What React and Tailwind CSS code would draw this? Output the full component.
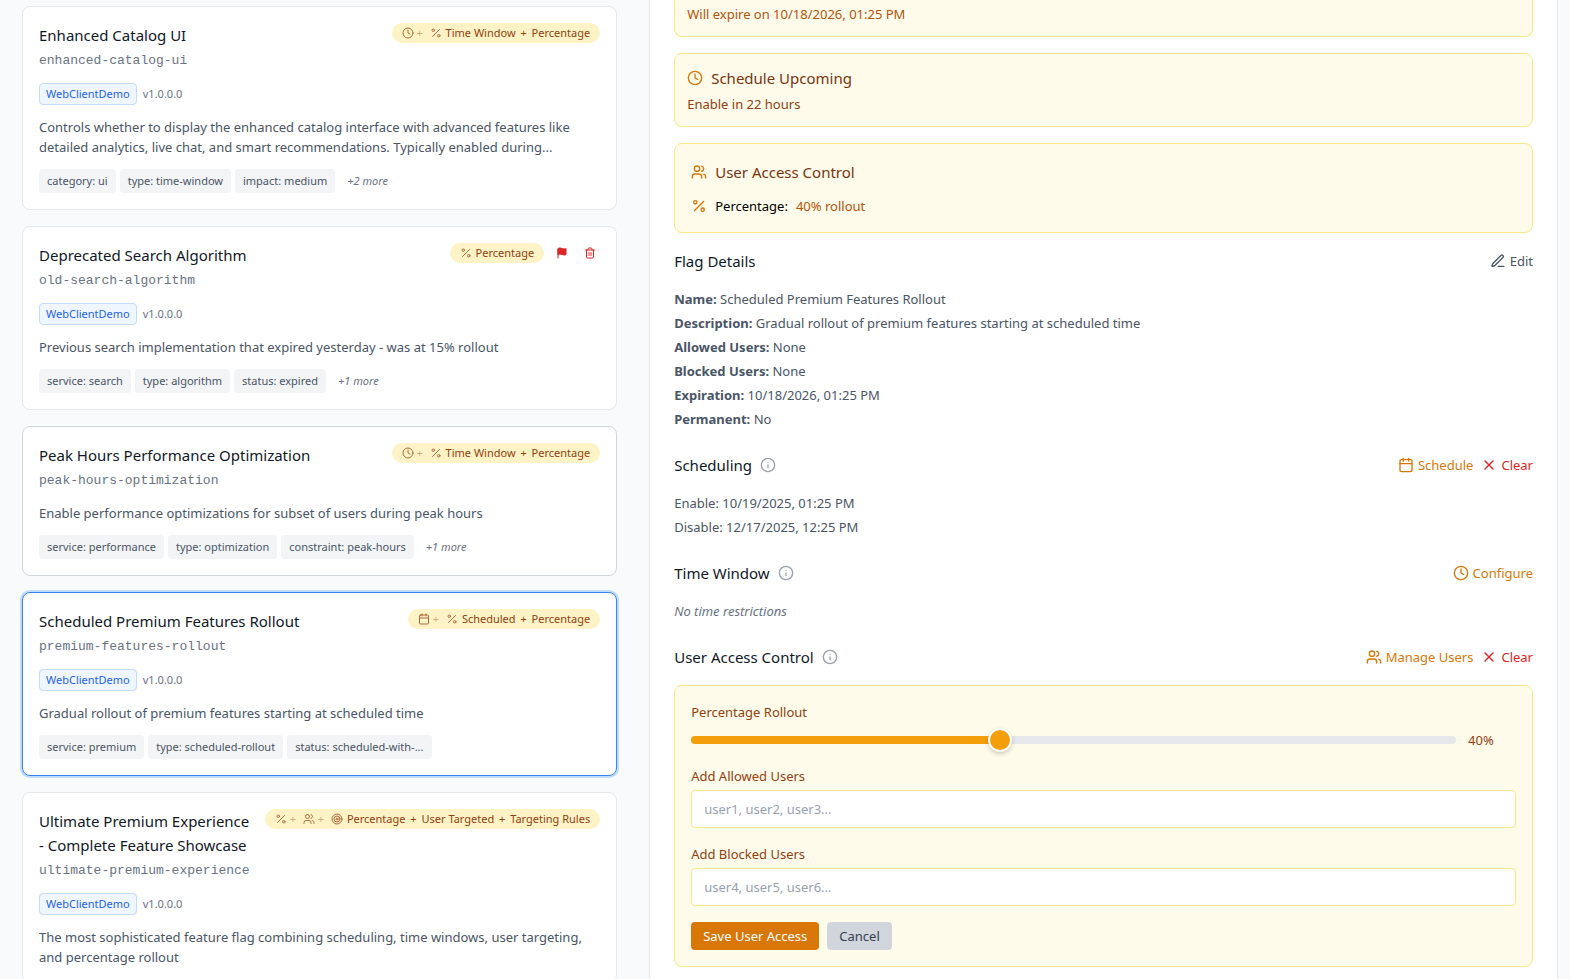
import { Fragment, useState } from "react";
import { Calendar, Clock, Info, Percent, Target, Trash2, Users, X } from "lucide-react";

function FlagIcon({ className }) {
  return (
    <svg viewBox="0 0 24 24" className={className} fill="currentColor" stroke="currentColor" strokeWidth="2" strokeLinecap="round" strokeLinejoin="round" aria-hidden="true">
      <path d="M4 15s1-1 4-1 5 2 8 2 4-1 4-1V3s-1 1-4 1-5-2-8-2-4 1-4 1z" />
      <path d="M4 22v-7" />
    </svg>
  );
}

function PenIcon({ className }) {
  return (
    <svg viewBox="0 0 24 24" className={className} fill="none" stroke="currentColor" strokeWidth="2" strokeLinecap="round" strokeLinejoin="round" aria-hidden="true">
      <path d="M12 20h9" />
      <path d="M16.376 3.622a1 1 0 0 1 3.002 3.002L7.368 18.635a2 2 0 0 1-.855.506l-2.872.838a.5.5 0 0 1-.62-.62l.838-2.872a2 2 0 0 1 .506-.854z" />
    </svg>
  );
}

const flags = [
  {
    name: "Enhanced Catalog UI",
    flagKey: "enhanced-catalog-ui",
    app: "WebClientDemo",
    icons: [Clock, Percent],
    modes: ["Time Window", "Percentage"],
    description:
      "Controls whether to display the enhanced catalog interface with advanced features like detailed analytics, live chat, and smart recommendations. Typically enabled during...",
    tags: ["category: ui", "type: time-window", "impact: medium"],
    more: "+2 more",
    border: "border-gray-200",
  },
  {
    name: "Deprecated Search Algorithm",
    flagKey: "old-search-algorithm",
    app: "WebClientDemo",
    icons: [Percent],
    modes: ["Percentage"],
    expired: true,
    description: "Previous search implementation that expired yesterday - was at 15% rollout",
    tags: ["service: search", "type: algorithm", "status: expired"],
    more: "+1 more",
    border: "border-gray-200",
  },
  {
    name: "Peak Hours Performance Optimization",
    flagKey: "peak-hours-optimization",
    icons: [Clock, Percent],
    modes: ["Time Window", "Percentage"],
    description: "Enable performance optimizations for subset of users during peak hours",
    tags: ["service: performance", "type: optimization", "constraint: peak-hours"],
    more: "+1 more",
    border: "border-gray-300",
  },
  {
    name: "Scheduled Premium Features Rollout",
    flagKey: "premium-features-rollout",
    app: "WebClientDemo",
    icons: [Calendar, Percent],
    modes: ["Scheduled", "Percentage"],
    description: "Gradual rollout of premium features starting at scheduled time",
    tags: ["service: premium", "type: scheduled-rollout", "status: scheduled-with-..."],
    border: "border-[#3b82f6] ring-2 ring-[#bfdbfe]",
  },
  {
    name: "Ultimate Premium Experience - Complete Feature Showcase",
    flagKey: "ultimate-premium-experience",
    app: "WebClientDemo",
    icons: [Percent, Users, Target],
    modes: ["Percentage", "User Targeted", "Targeting Rules"],
    description:
      "The most sophisticated feature flag combining scheduling, time windows, user targeting, and percentage rollout",
    border: "border-gray-200",
  },
];

function StatusBadge({ icons, modes }) {
  return (
    <span className="inline-flex shrink-0 items-center rounded-full bg-[#fef3c7] px-2.5 py-0.5 text-[11px] leading-4 text-[#92400e]">
      {icons.map((Icon, i) => (
        <span key={i} className="flex items-center">
          {i > 0 && <span className="mr-1.5 ml-0.5 w-2 text-center opacity-40">+</span>}
          <Icon className="size-3 opacity-75" aria-hidden="true" />
        </span>
      ))}
      <span className="ml-1">
        {modes.map((mode, i) => (
          <Fragment key={mode}>
            {i > 0 && <span className="mx-0.5"> + </span>}
            {mode}
          </Fragment>
        ))}
      </span>
    </span>
  );
}

function FlagCard({ flag }) {
  return (
    <article className={`rounded-lg border bg-white p-4 ${flag.border}`}>
      <div className="flex items-start justify-between gap-3">
        <div className="min-w-0">
          <h3 className="text-[15px] leading-6 text-gray-900">{flag.name}</h3>
          <p className="mt-1 font-['Liberation_Mono',monospace] text-[13px] leading-5 text-gray-500">{flag.flagKey}</p>
        </div>
        <div className="flex shrink-0 items-center gap-2">
          <StatusBadge icons={flag.icons} modes={flag.modes} />
          {flag.expired && (
            <>
              <button type="button" aria-label="Expired flag" className="p-1 text-[#dc2626]">
                <FlagIcon className="size-3" />
              </button>
              <button type="button" aria-label="Delete flag" className="p-1 text-[#dc2626]">
                <Trash2 className="size-3" />
              </button>
            </>
          )}
        </div>
      </div>
      {flag.app && (
        <div className="mt-3 flex items-center gap-1.5 text-[11px] leading-4">
          <span className="rounded border border-[#bfdbfe] bg-[#eff6ff] px-1.5 py-0.5 text-[#2563eb]">{flag.app}</span>
          <span className="text-gray-500">v1.0.0.0</span>
        </div>
      )}
      <p className="mt-3 text-[13px] leading-5 text-gray-600">{flag.description}</p>
      {flag.tags && (
        <div className="mt-3 flex flex-wrap gap-1 text-[11px] leading-4">
          {flag.tags.map((tag) => (
            <span key={tag} className="rounded bg-gray-100 px-2 py-1 text-gray-600">{tag}</span>
          ))}
          {flag.more && <span className="px-2 py-1 text-gray-500 italic">{flag.more}</span>}
        </div>
      )}
    </article>
  );
}

function TextButton({ icon: Icon, color, children }) {
  return (
    <button type="button" className={`flex items-center gap-1 text-[13px] leading-5 ${color}`}>
      <Icon className="size-4" aria-hidden="true" />
      {children}
    </button>
  );
}

function SectionHeader({ title, info, children }) {
  return (
    <div className="mb-4 flex items-center justify-between">
      <div className="flex items-center gap-2">
        <h4 className="text-[15px] leading-6 text-gray-900">{title}</h4>
        {info && (
          <button type="button" aria-label={`About ${title}`} className="text-gray-400">
            <Info className="size-4" />
          </button>
        )}
      </div>
      <div className="flex items-center gap-2">{children}</div>
    </div>
  );
}

const details = [
  ["Name:", "Scheduled Premium Features Rollout"],
  ["Description:", "Gradual rollout of premium features starting at scheduled time"],
  ["Allowed Users:", "None"],
  ["Blocked Users:", "None"],
  ["Expiration:", "10/18/2026, 01:25 PM"],
  ["Permanent:", "No"],
];

function UserField({ id, label, placeholder }) {
  return (
    <div className="mb-4">
      <label htmlFor={id} className="mb-1 block text-[13px] leading-5 text-[#92400e]">{label}</label>
      <input
        id={id}
        type="text"
        placeholder={placeholder}
        className="block w-full rounded border border-[#fde68a] bg-white px-3 py-2 text-[13px] leading-5 text-gray-900 placeholder:text-gray-400"
      />
    </div>
  );
}

function AccessForm() {
  const [percent, setPercent] = useState(40);
  return (
    <form className="rounded-lg border border-[#fde68a] bg-[#fffbeb] p-4" onSubmit={(e) => e.preventDefault()}>
      <label htmlFor="rollout" className="mb-2 block text-[13px] leading-5 text-[#92400e]">Percentage Rollout</label>
      <div className="mb-4 flex items-center gap-3">
        <input
          id="rollout"
          type="range"
          min="0"
          max="100"
          value={percent}
          onChange={(e) => setPercent(Number(e.target.value))}
          style={{ background: `linear-gradient(to right, #f59e0b ${percent}%, #e5e7eb ${percent}%)` }}
          className="h-2 min-w-0 flex-1 cursor-pointer appearance-none rounded-full [&::-webkit-slider-thumb]:size-6 [&::-webkit-slider-thumb]:appearance-none [&::-webkit-slider-thumb]:rounded-full [&::-webkit-slider-thumb]:border-2 [&::-webkit-slider-thumb]:border-white [&::-webkit-slider-thumb]:bg-[#f59e0b] [&::-webkit-slider-thumb]:shadow-[0_2px_4px_rgba(0,0,0,0.2)]"
        />
        <output htmlFor="rollout" className="w-12 text-[13px] leading-5 text-[#92400e]">{percent}%</output>
      </div>
      <UserField id="allowed-users" label="Add Allowed Users" placeholder="user1, user2, user3..." />
      <UserField id="blocked-users" label="Add Blocked Users" placeholder="user4, user5, user6..." />
      <div className="flex gap-2 text-[13px] leading-5">
        <button type="submit" className="rounded bg-[#d97706] px-3 py-1 text-white">Save User Access</button>
        <button type="button" className="rounded bg-gray-300 px-3 py-1 text-gray-700">Cancel</button>
      </div>
    </form>
  );
}

function FlagPanel() {
  return (
    <section className="border-x border-gray-200 bg-white px-6">
      <div className="mb-4 rounded-b-lg border border-t-0 border-[#fde68a] bg-[#fffbeb] px-3 pt-1 pb-3">
        <p className="text-[13px] leading-5 text-[#b45309]">Will expire on 10/18/2026, 01:25 PM</p>
      </div>

      <div className="mb-4 rounded-lg border border-[#fde68a] bg-[#fffbeb] p-3">
        <div className="mb-1 flex items-center gap-2">
          <Clock className="size-4 text-[#d97706]" aria-hidden="true" />
          <h4 className="text-[15px] leading-6 text-[#78350f]">Schedule Upcoming</h4>
        </div>
        <p className="text-[13px] leading-5 text-[#92400e]">Enable in 22 hours</p>
      </div>

      <div className="mb-4 rounded-lg border border-[#fde68a] bg-[#fffbeb] p-4">
        <div className="mb-3 flex items-center gap-2">
          <Users className="size-4 text-[#d97706]" aria-hidden="true" />
          <h4 className="text-[15px] leading-6 text-[#78350f]">User Access Control</h4>
        </div>
        <div className="flex items-center gap-2 text-[13px] leading-5">
          <Percent className="size-4 text-[#d97706]" aria-hidden="true" />
          <span className="text-black">Percentage:</span>
          <span className="text-[#b45309]">40% rollout</span>
        </div>
      </div>

      <div className="mb-6">
        <SectionHeader title="Flag Details">
          <TextButton icon={PenIcon} color="text-gray-600">Edit</TextButton>
        </SectionHeader>
        <div className="space-y-1 text-[13px] leading-5 text-gray-600">
          {details.map(([term, value]) => (
            <p key={term}>
              <strong className="font-bold">{term}</strong> {value}
            </p>
          ))}
        </div>
      </div>

      <div className="mb-6">
        <SectionHeader title="Scheduling" info>
          <TextButton icon={Calendar} color="text-[#d97706]">Schedule</TextButton>
          <TextButton icon={X} color="text-[#dc2626]">Clear</TextButton>
        </SectionHeader>
        <div className="space-y-1 text-[13px] leading-5 text-gray-600">
          <p>Enable: 10/19/2025, 01:25 PM</p>
          <p>Disable: 12/17/2025, 12:25 PM</p>
        </div>
      </div>

      <div className="mb-6">
        <SectionHeader title="Time Window" info>
          <TextButton icon={Clock} color="text-[#d97706]">Configure</TextButton>
        </SectionHeader>
        <p className="text-[13px] leading-5 text-gray-500 italic">No time restrictions</p>
      </div>

      <SectionHeader title="User Access Control" info>
        <TextButton icon={Users} color="text-[#d97706]">Manage Users</TextButton>
        <TextButton icon={X} color="text-[#dc2626]">Clear</TextButton>
      </SectionHeader>
      <AccessForm />
    </section>
  );
}

export default function App() {
  return (
    <main className="h-screen overflow-hidden bg-gray-50 pr-3 pl-[22px] font-['Noto_Sans',sans-serif]">
      <div className="grid min-h-full grid-cols-5 gap-8">
        <div className="col-span-2 space-y-4 pt-1.5">
          {flags.map((flag) => (
            <FlagCard key={flag.flagKey} flag={flag} />
          ))}
        </div>
        <div className="col-span-3 grid">
          <FlagPanel />
        </div>
      </div>
    </main>
  );
}
